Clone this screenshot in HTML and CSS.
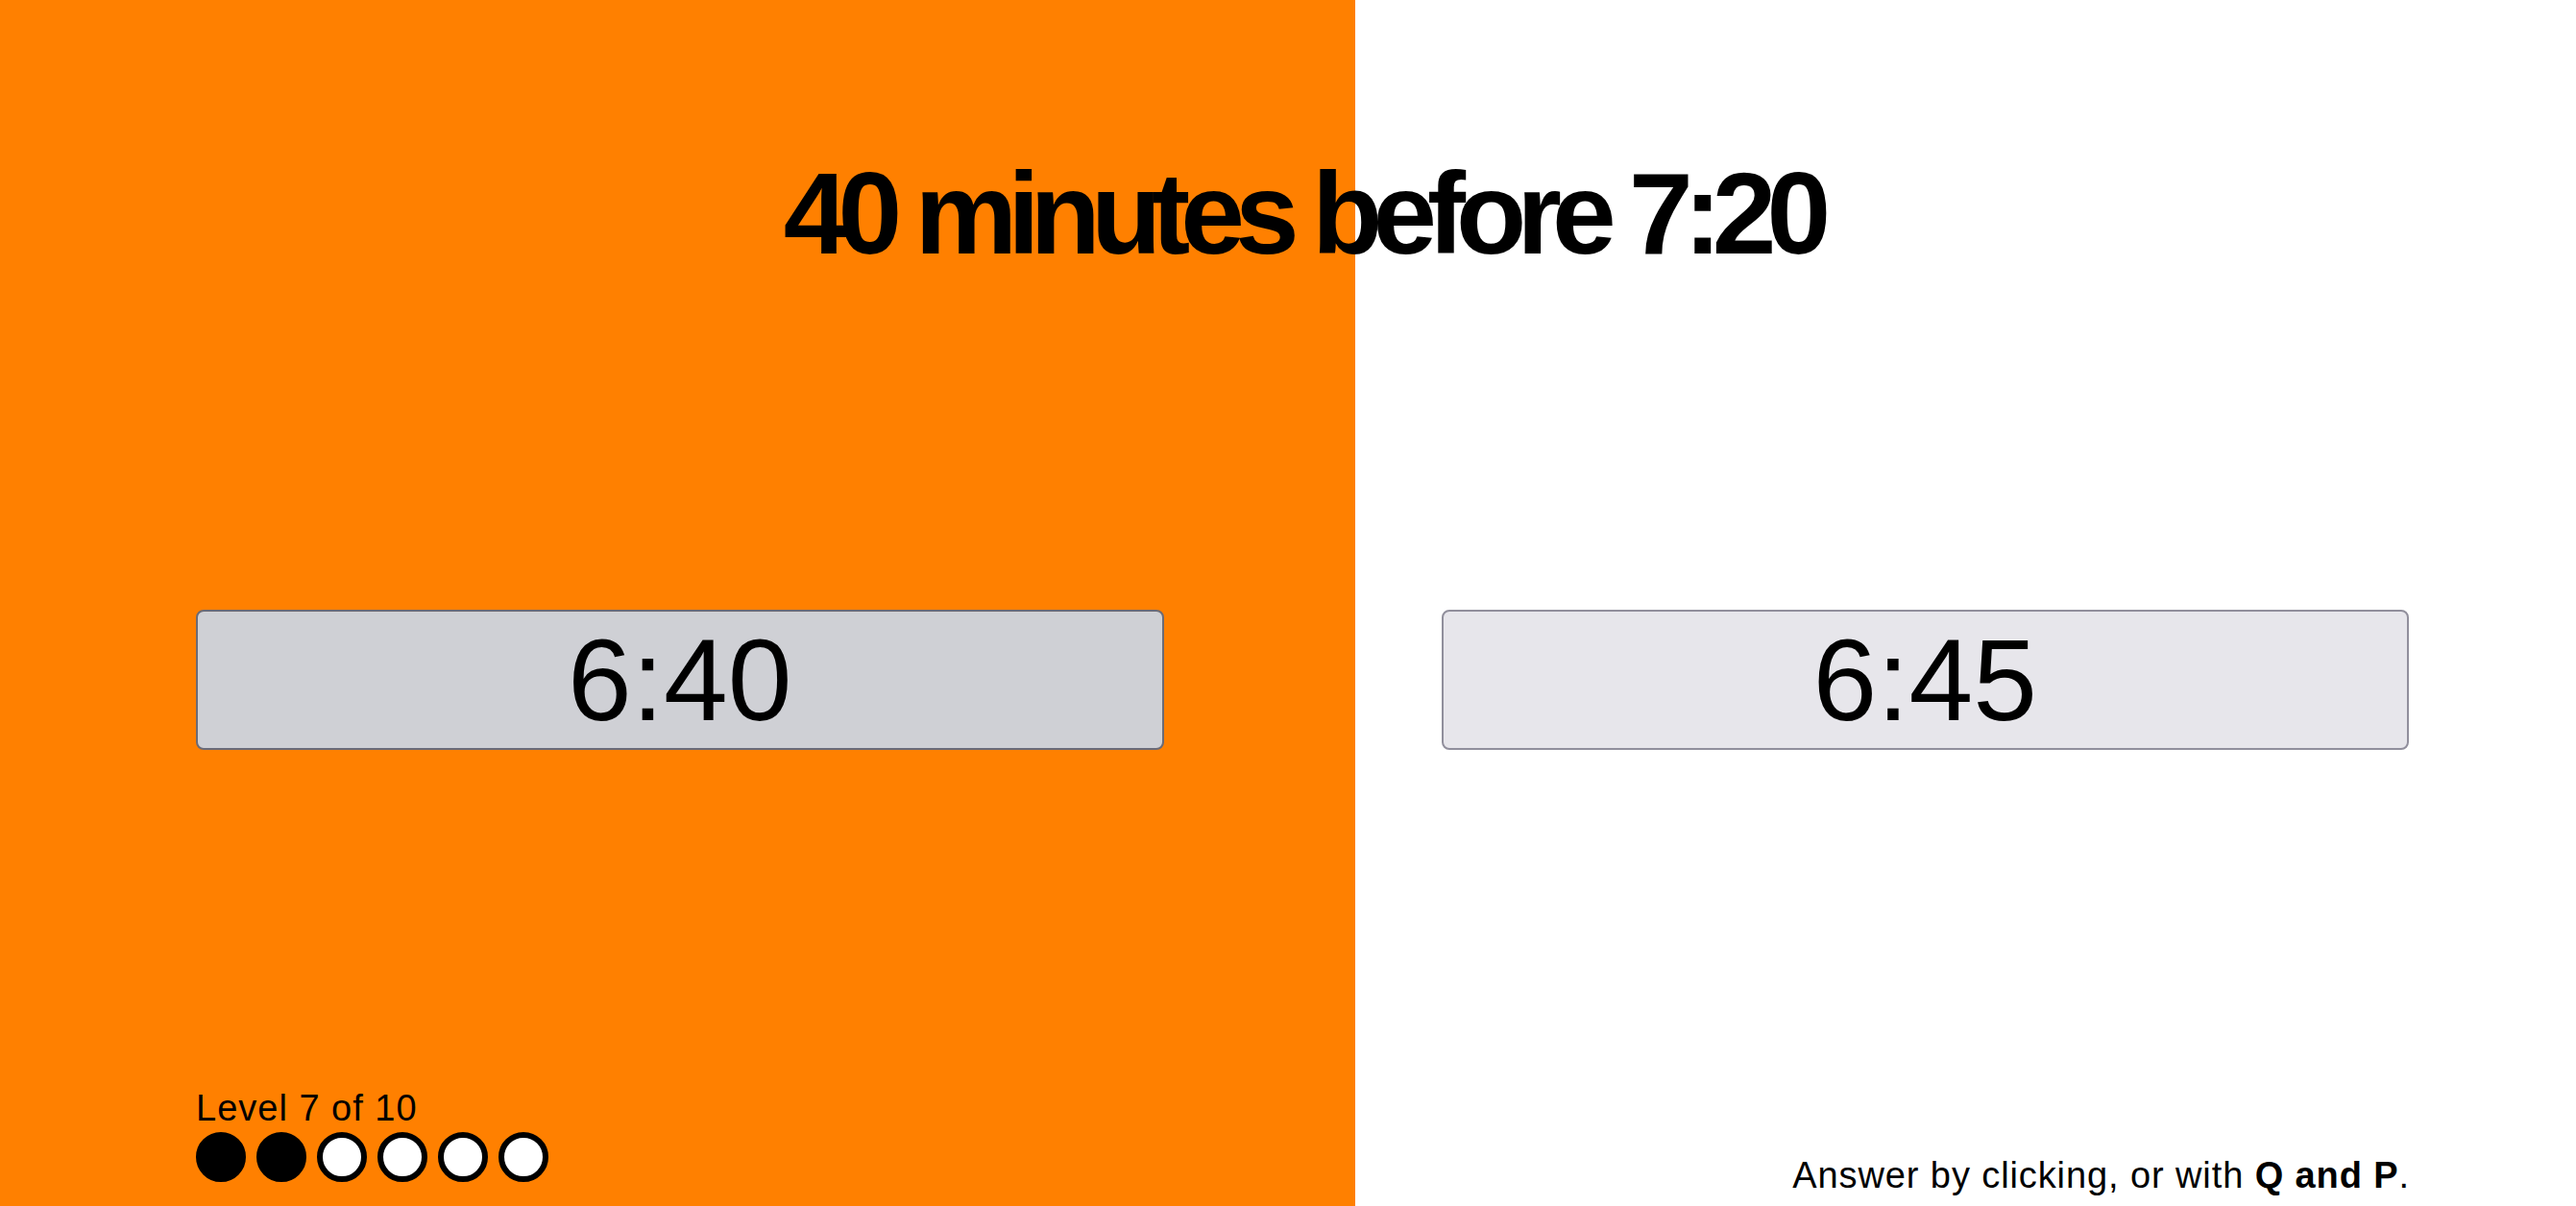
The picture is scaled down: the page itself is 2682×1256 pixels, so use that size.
FILE: index.html
```html
<!DOCTYPE html>
<html lang="en">
<head>
<meta charset="utf-8">
<title>Time quiz</title>
<link rel="stylesheet" href="styles.css">
</head>
<body>
<div class="page">
  <h1 class="question">40 minutes before 7:20</h1>
  <div class="choices">
    <button class="choice choice--hover">6:40</button>
    <button class="choice">6:45</button>
  </div>
  <footer class="footer">
    <div class="progress">
      <div class="level">Level 7 of 10</div>
      <div class="dots">
        <span class="dot dot--done"></span>
        <span class="dot dot--done"></span>
        <span class="dot"></span>
        <span class="dot"></span>
        <span class="dot"></span>
        <span class="dot"></span>
      </div>
    </div>
    <p class="hint">Answer by clicking, or with <b>Q and P</b>.</p>
  </footer>
</div>
</body>
</html>
```

FILE: styles.css
```css
html, body {
  margin: 0;
  padding: 0;
}
body {
  font-family: "Liberation Sans", Arial, sans-serif;
  color: #000;
  background: linear-gradient(to right, #ff8000 0, #ff8000 1411px, #ffffff 1411px);
  min-height: 1256px;
}
.page {
  box-sizing: border-box;
  height: 1256px;
  display: flex;
  flex-direction: column;
  padding: 162px 174px 11px 204px;
}
.question {
  margin: 0;
  font-size: 120px;
  line-height: 120px;
  font-weight: 700;
  letter-spacing: -10px;
  text-align: center;
}
.choices {
  margin-top: 353px;
  display: grid;
  grid-template-columns: 1fr 1fr;
  column-gap: 289px;
}
.choice {
  box-sizing: border-box;
  height: 146px;
  margin: 0;
  padding: 0;
  font-family: "Liberation Sans", Arial, sans-serif;
  font-size: 120px;
  line-height: 1;
  color: #000;
  background: #e7e6eb;
  border: 2px solid #918f9c;
  border-radius: 8px;
  cursor: pointer;
}
.choice--hover {
  background: #cfd0d5;
  border-color: #6b6b77;
}
.footer {
  margin-top: auto;
  display: flex;
  justify-content: space-between;
  align-items: flex-end;
}
.progress {
  margin-bottom: 14px;
}
.level {
  font-size: 38px;
  line-height: 41px;
  letter-spacing: 1px;
}
.dots {
  display: flex;
  gap: 11px;
  margin-top: 4px;
}
.dot {
  box-sizing: border-box;
  width: 52px;
  height: 52px;
  border-radius: 50%;
  background: #fff;
  border: 6px solid #000;
}
.dot--done {
  background: #000;
}
.hint {
  margin: 0 -1px 0 0;
  font-size: 38px;
  line-height: 41px;
  letter-spacing: 0.9px;
}
.hint b {
  font-weight: 700;
}
```
